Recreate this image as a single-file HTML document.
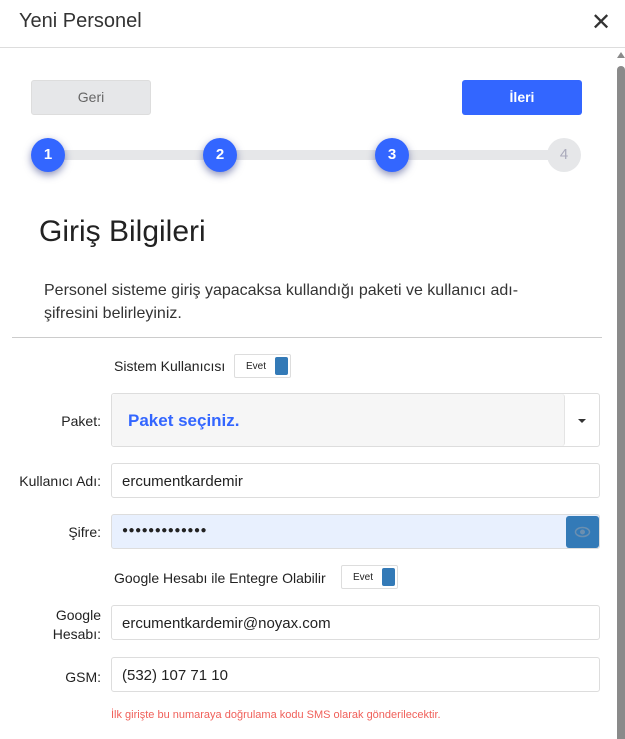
<!DOCTYPE html>
<html><head><meta charset="utf-8"><style>
*{margin:0;padding:0;box-sizing:border-box}
body{width:625px;height:739px;overflow:hidden;background:#fff;font-family:"Liberation Sans",sans-serif;color:#222;position:relative}
.a{position:absolute}
.inp{position:absolute;left:111px;width:489px;height:35px;border:1px solid #ddd;border-radius:3px;background:#fff;font-size:15px;padding:9px 0 0 10px;color:#222}
.lbl{position:absolute;right:524px;font-size:14px;color:#222;text-align:right}
.tog{position:absolute;width:57px;height:24px;border:1px solid #ddd;border-radius:2px;background:#fff;font-size:10px}
.tog span{position:absolute;left:11px;top:6px}
.tog i{position:absolute;right:2px;top:2px;width:13px;height:18px;background:#337ab7;border-radius:2px}
.step{position:absolute;top:138px;width:34px;height:34px;border-radius:50%;background:#3366ff;color:#fff;font-weight:bold;font-size:15px;text-align:center;line-height:34px;box-shadow:0 3px 8px rgba(30,40,120,.5)}
</style></head><body>
<div class="a" style="left:19px;top:10px;font-size:20px;color:#333">Yeni Personel</div>
<div class="a" style="left:591px;top:8px;font-size:24px;color:#333">✕</div>
<div class="a" style="left:0;top:47px;width:625px;height:1px;background:#ddd"></div>
<div class="a" style="left:617px;top:66px;width:8px;height:673px;background:#8a8a8a;border-radius:4px 4px 0 0"></div>
<div class="a" style="left:617px;top:52px;width:0;height:0;border-left:4px solid transparent;border-right:4px solid transparent;border-bottom:6px solid #8a8a8a"></div>
<div class="a" style="left:31px;top:80px;width:120px;height:35px;background:#e6e7e9;border:1px solid #ddd;border-radius:3px;color:#666;font-size:14px;text-align:center;line-height:33px">Geri</div>
<div class="a" style="left:462px;top:80px;width:120px;height:35px;background:#3366ff;border-radius:3px;color:#fff;font-size:14px;font-weight:bold;text-align:center;line-height:35px">İleri</div>
<div class="a" style="left:50px;top:150px;width:515px;height:10px;background:#e6e7e9"></div>
<div class="step" style="left:31px">1</div>
<div class="step" style="left:203px">2</div>
<div class="step" style="left:375px">3</div>
<div class="step" style="left:547px;background:#e6e7e9;color:#aab;font-weight:normal;box-shadow:none">4</div>
<div class="a" style="left:39px;top:215px;font-size:30px;color:#222">Giriş Bilgileri</div>
<div class="a" style="left:44px;top:279px;width:525px;font-size:16px;line-height:23px;color:#333">Personel sisteme giriş yapacaksa kullandığı paketi ve kullanıcı adı-şifresini belirleyiniz.</div>
<div class="a" style="left:12px;top:337px;width:590px;height:1px;background:#ccc"></div>
<div class="a" style="left:114px;top:358px;font-size:14px">Sistem Kullanıcısı</div>
<div class="tog" style="left:234px;top:354px"><span>Evet</span><i></i></div>
<div class="lbl" style="top:413px">Paket:</div>
<div class="a" style="left:111px;top:393px;width:489px;height:54px;border:1px solid #ddd;border-radius:3px;background:#fff"></div>
<div class="a" style="left:112px;top:394px;width:453px;height:52px;background:#f6f6f6;border-right:1px solid #e4e4e4;border-radius:3px;color:#3366ff;font-size:17px;font-weight:bold;padding:17px 0 0 16px">Paket seçiniz.</div>
<div class="a" style="left:578px;top:419px;border-left:4px solid transparent;border-right:4px solid transparent;border-top:4px solid #333"></div>
<div class="lbl" style="top:473px">Kullanıcı Adı:</div>
<div class="inp" style="top:463px">ercumentkardemir</div>
<div class="lbl" style="top:524px">Şifre:</div>
<div class="inp" style="top:514px;background:#e8f0fe;letter-spacing:0.5px;padding-top:10px;font-size:10px">●●●●●●●●●●●●●</div>
<div class="a" style="left:566px;top:516px;width:33px;height:32px;background:#337ab7;border-radius:3px"><svg width="33" height="32" viewBox="0 0 33 32"><ellipse cx="16.5" cy="16" rx="7" ry="4.5" fill="none" stroke="#6b8fb0" stroke-width="1.5"/><circle cx="16.5" cy="16" r="2.5" fill="#6b8fb0"/></svg></div>
<div class="a" style="left:114px;top:570px;font-size:14px">Google Hesabı ile Entegre Olabilir</div>
<div class="tog" style="left:341px;top:565px"><span>Evet</span><i></i></div>
<div class="lbl" style="top:606px;line-height:19px">Google<br>Hesabı:</div>
<div class="inp" style="top:605px">ercumentkardemir@noyax.com</div>
<div class="lbl" style="top:669px">GSM:</div>
<div class="inp" style="top:657px">(532) 107 71 10</div>
<div class="a" style="left:111px;top:709px;font-size:11px;color:#f0605a">İlk girişte bu numaraya doğrulama kodu SMS olarak gönderilecektir.</div>
</body></html>
